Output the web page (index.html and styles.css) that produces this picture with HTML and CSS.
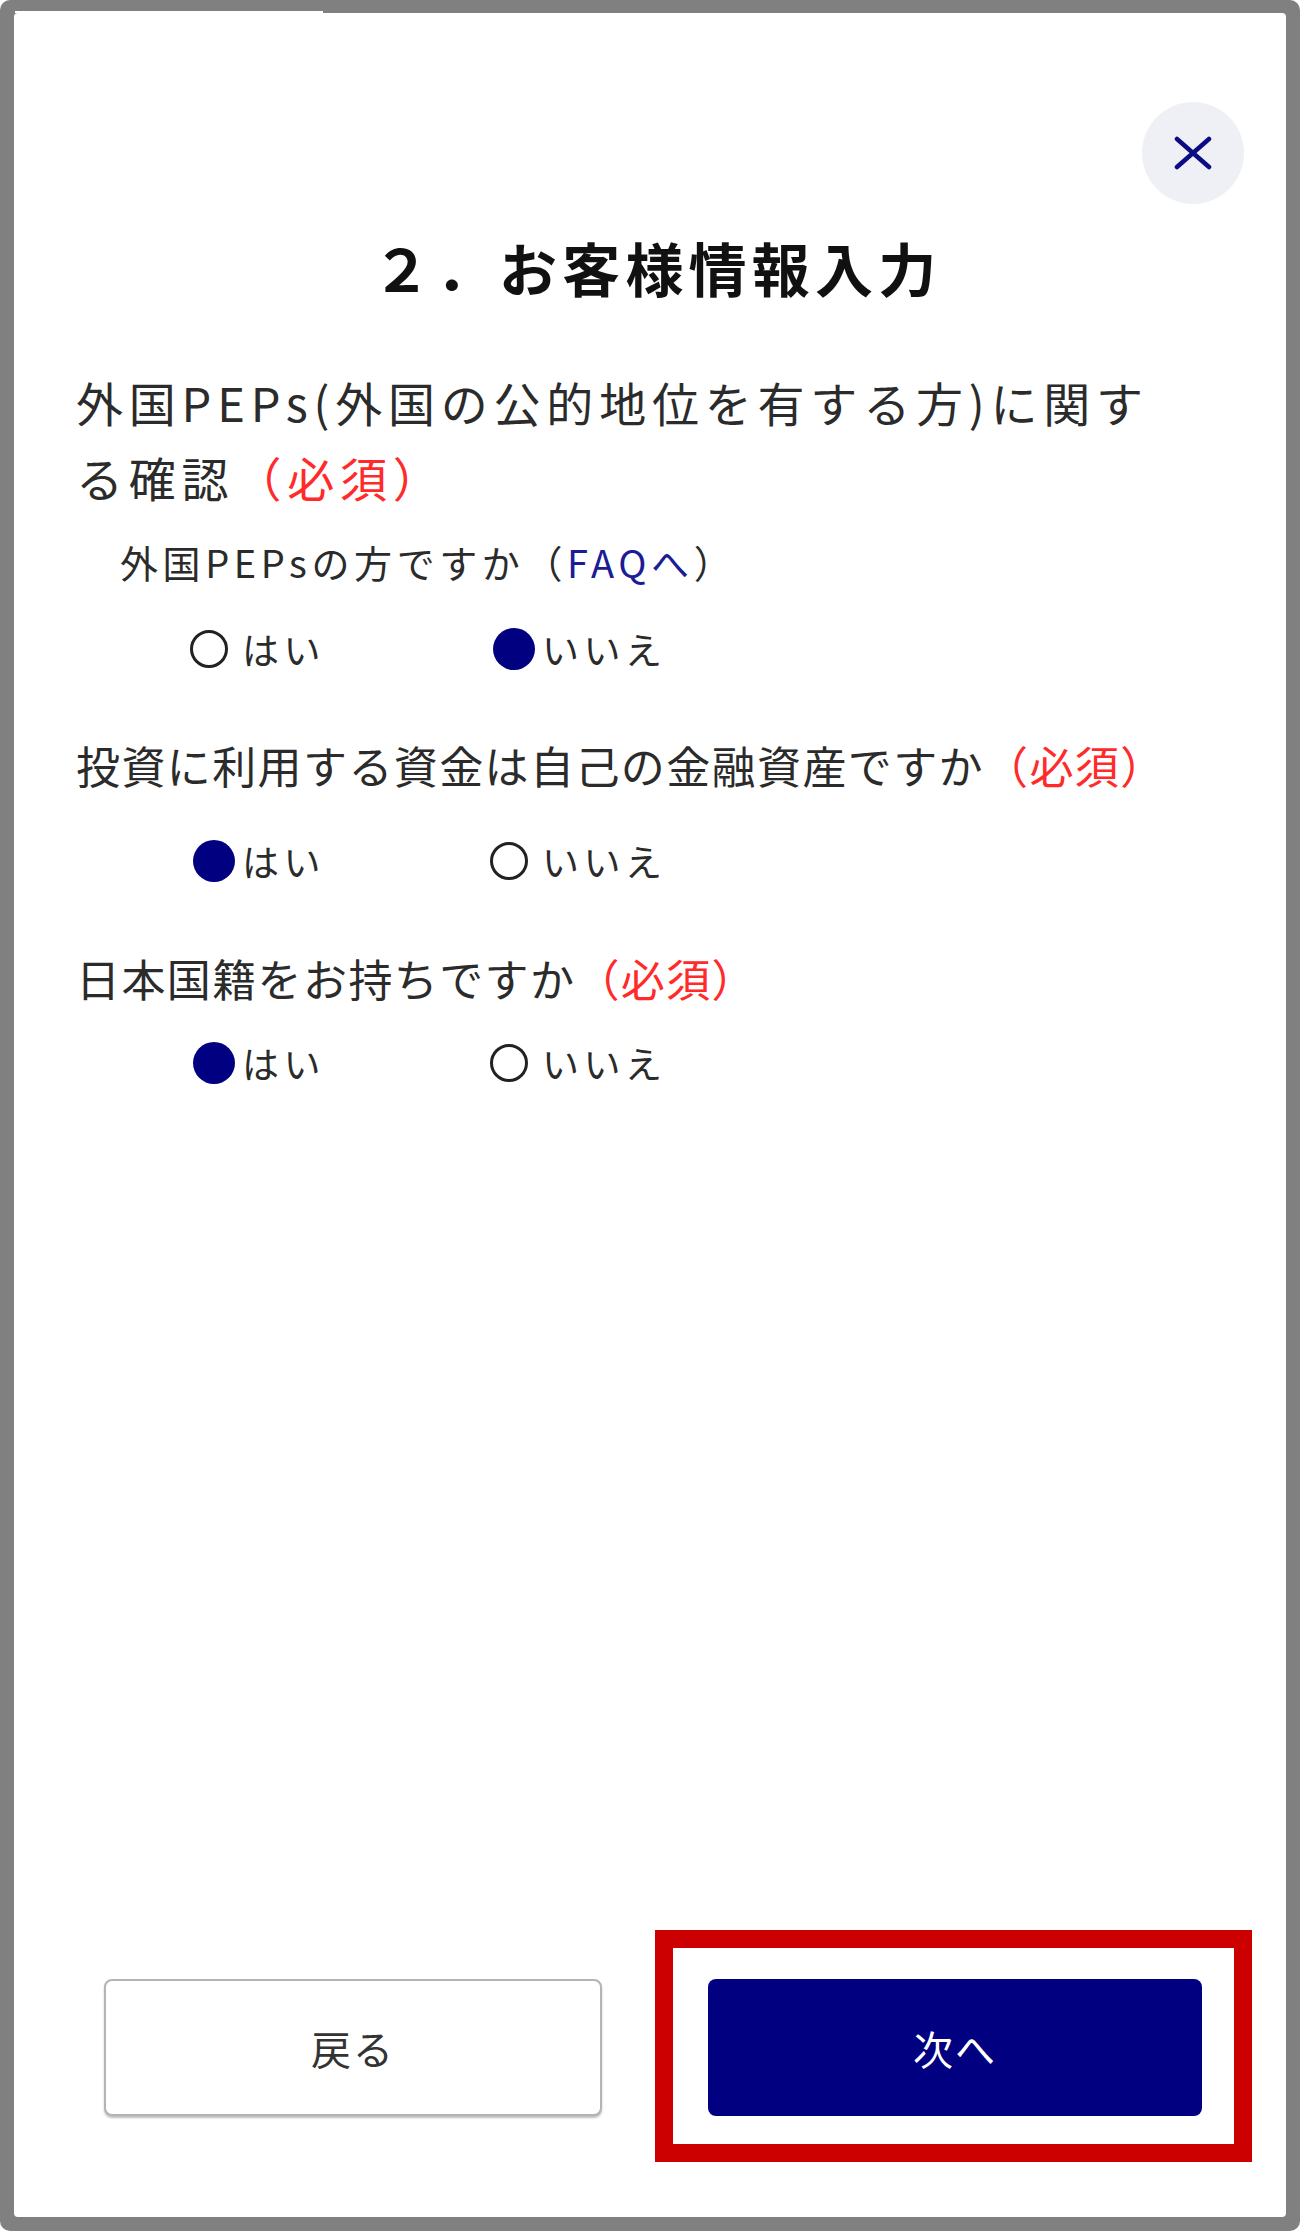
FILE: index.html
```html
<!DOCTYPE html>
<html lang="ja">
<head>
<meta charset="utf-8">
<title>お客様情報入力</title>
<link rel="stylesheet" href="styles.css">
</head>
<body>
<div class="frame">
  <div class="panel">
    <div class="header">
      <button class="close" type="button" aria-label="閉じる">
        <svg width="38" height="34" viewBox="0 0 38 34"><path d="M3 3 L35 31 M35 3 L3 31" stroke="#0b0b82" stroke-width="4.5" stroke-linecap="round" fill="none"/></svg>
      </button>
    </div>
    <h1 class="title">２．お客様情報入力</h1>

    <div class="q q--first"><span>外国PEPs(外国の公的地位を有する方)に関する確認</span><span class="req">（必須）</span></div>
    <div class="sub">外国PEPsの方ですか（<a class="faq">FAQへ</a>）</div>
    <div class="row row--1">
      <label class="opt"><span class="mark"><span class="dot"></span></span><span class="txt">はい</span></label>
      <label class="opt"><span class="mark"><span class="dot dot--on"></span></span><span class="txt">いいえ</span></label>
    </div>

    <div class="q q--2">投資に利用する資金は自己の金融資産ですか<span class="req">（必須）</span></div>
    <div class="row row--2">
      <label class="opt"><span class="mark"><span class="dot dot--on"></span></span><span class="txt">はい</span></label>
      <label class="opt"><span class="mark"><span class="dot"></span></span><span class="txt">いいえ</span></label>
    </div>

    <div class="q q--3">日本国籍をお持ちですか<span class="req">（必須）</span></div>
    <div class="row row--3">
      <label class="opt"><span class="mark"><span class="dot dot--on"></span></span><span class="txt">はい</span></label>
      <label class="opt"><span class="mark"><span class="dot"></span></span><span class="txt">いいえ</span></label>
    </div>

    <div class="footer">
      <button class="btn btn--back" type="button">戻る</button>
      <button class="btn btn--next" type="button">次へ</button>
    </div>
  </div>
  <div class="highlight"></div>
</div>
</body>
</html>
```

FILE: styles.css
```css
html {
  background: #ffffff;
}
body {
  margin: 0;
  font-family: "Noto Sans CJK JP", "Noto Sans", sans-serif;
  color: #2b2b2b;
}
.frame {
  position: relative;
  width: 1300px;
  height: 2231px;
  box-sizing: border-box;
  background: #808080;
  border-radius: 10px;
  padding: 13px 14px 14px 14px;
}
.panel {
  position: relative;
  height: 100%;
  box-sizing: border-box;
  background: #ffffff;
  border-radius: 4px;
  padding: 0 0 101px 62px;
  display: flex;
  flex-direction: column;
}
.panel::before {
  content: "";
  position: absolute;
  top: -2px;
  left: 1px;
  width: 308px;
  height: 2px;
  background: #ffffff;
}
.header {
  display: flex;
  justify-content: flex-end;
  padding: 89px 42px 0 0;
}
.close {
  width: 102px;
  height: 102px;
  border: none;
  border-radius: 50%;
  background: #eff0f6;
  display: flex;
  align-items: center;
  justify-content: center;
  padding: 0;
}
.title {
  margin: 23px 0 0 -62px;
  padding-left: 14px;
  text-align: center;
  font-size: 58px;
  line-height: 80px;
  font-weight: 700;
  letter-spacing: 5.2px;
  color: #111111;
}
.q {
  font-size: 44px;
  line-height: 60px;
  letter-spacing: 1.4px;
  color: #2b2b2b;
}
.q--first {
  margin-top: 57px;
  font-size: 47px;
  line-height: 75px;
  letter-spacing: 5.8px;
  max-width: 1090px;
}
.q--2 {
  margin-top: 58px;
}
.q--3 {
  margin-top: 59px;
}
.req {
  color: #ff2a2a;
}
.sub {
  margin: 20px 0 0 44px;
  font-size: 38px;
  line-height: 56px;
  letter-spacing: 4.6px;
}
.faq {
  color: #1c1c96;
}
.row {
  display: flex;
  align-items: center;
  height: 56px;
  padding-left: 114px;
}
.row--1 {
  margin-top: 31px;
}
.row--2 {
  margin-top: 38px;
}
.row--3 {
  margin-top: 27px;
}
.opt {
  display: flex;
  align-items: center;
  width: 300px;
  font-size: 37px;
  letter-spacing: 4.5px;
  line-height: 56px;
}
.mark {
  width: 52px;
  height: 56px;
  display: flex;
  align-items: center;
}
.dot {
  width: 38px;
  height: 38px;
  box-sizing: border-box;
  border: 3px solid #222222;
  border-radius: 50%;
}
.dot--on {
  width: 42px;
  height: 42px;
  margin-left: 3px;
  border: none;
  background: #000080;
}
.footer {
  margin-top: auto;
  display: flex;
  gap: 106px;
  padding: 0 84px 0 28px;
}
.btn {
  flex: 1;
  height: 137px;
  border-radius: 8px;
  font-family: "Noto Sans CJK JP", sans-serif;
  font-size: 40px;
  letter-spacing: 2px;
}
.btn--back {
  background: #ffffff;
  color: #333333;
  border: 2px solid #b4b4b4;
  box-shadow: 0 2px 2px rgba(0, 0, 0, 0.25);
}
.btn--next {
  background: #000080;
  color: #ffffff;
  border: none;
}
.highlight {
  position: absolute;
  left: 655px;
  top: 1930px;
  width: 597px;
  height: 232px;
  box-sizing: border-box;
  border: 18px solid #cc0000;
}
```
